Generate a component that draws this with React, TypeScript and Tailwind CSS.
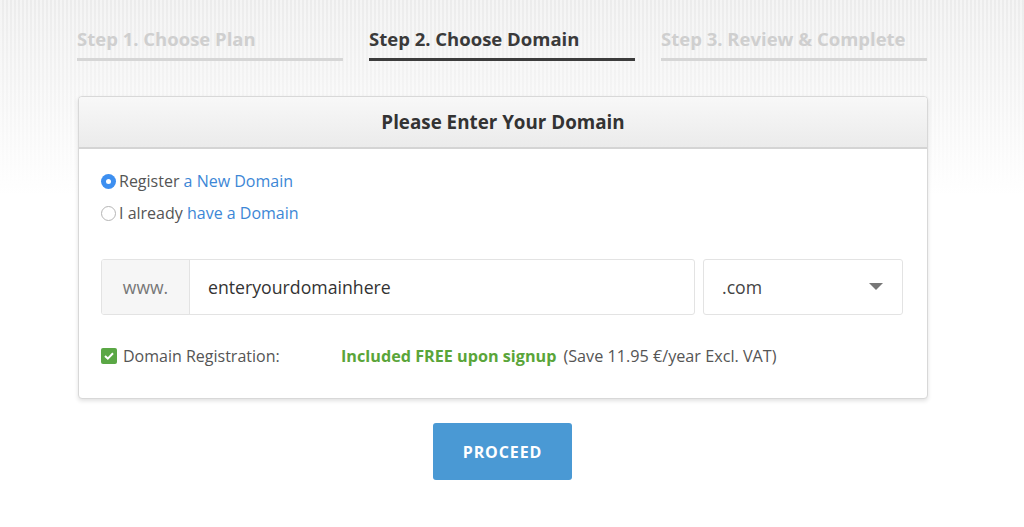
import React from "react";

export default function App() {
  return (
    <div
      className="min-h-[527px] w-full bg-[repeating-linear-gradient(90deg,rgba(255,255,255,0.45)_0px,rgba(255,255,255,0.45)_2px,transparent_2px,transparent_4px),linear-gradient(to_bottom,#ececec_0px,#f6f6f6_110px,#ffffff_195px)] bg-no-repeat [background-size:100%_200px,100%_200px]"
      style={{ fontFamily: '"Open Sans", "Noto Sans", sans-serif' }}
    >
      <div className="ml-[77px] w-[851px] pt-[26px]">
        {/* Steps */}
        <div className="flex gap-[26px]">
          <div className="w-[266px] border-b-[3px] border-[#d6d6d6] pb-[6px] text-[18.5px] font-bold leading-[26px] text-[#cfcfcf]">
            Step 1. Choose Plan
          </div>
          <div className="w-[266px] border-b-[3px] border-[#3c3c3c] pb-[6px] text-[18.5px] font-bold leading-[26px] text-[#3a3a3a]">
            Step 2. Choose Domain
          </div>
          <div className="w-[266px] border-b-[3px] border-[#d6d6d6] pb-[6px] text-[18.5px] font-bold leading-[26px] text-[#cfcfcf]">
            Step 3. Review &amp; Complete
          </div>
        </div>

        {/* Card */}
        <div className="mt-[35px] ml-px overflow-hidden rounded-[4px] border border-[#d8d8d8] bg-white shadow-[0_2px_4px_rgba(0,0,0,0.12)]">
          <div className="flex h-[52px] items-center justify-center border-b-2 border-[#d4d4d4] bg-[linear-gradient(to_bottom,#f8f8f8,#ebebeb)] text-[18.8px] font-bold text-[#333]">
            Please Enter Your Domain
          </div>
          <div className="px-[22px] pt-[21px] pb-[31px]">
            <div className="flex flex-col gap-[10px] text-[16px] leading-[22px] text-[#555]">
              <label className="flex items-center gap-[3px]">
                <span className="flex h-[15px] w-[15px] items-center justify-center rounded-full bg-[#3d8ff0]">
                  <span className="h-[5px] w-[5px] rounded-full bg-white" />
                </span>
                <span>
                  Register <span className="text-[#3d87d6]">a New Domain</span>
                </span>
              </label>
              <label className="flex items-center gap-[3px]">
                <span className="h-[15px] w-[15px] rounded-full border border-[#b5b5b5] bg-white" />
                <span>
                  I already <span className="text-[#3d87d6]">have a Domain</span>
                </span>
              </label>
            </div>

            <div className="mt-[35px] flex gap-[8px]">
              <div className="flex h-[56px] w-[594px] overflow-hidden rounded-[3px] border border-[#e3e3e3]">
                <div className="flex w-[88px] items-center justify-center border-r border-[#e3e3e3] bg-[#f6f6f6] text-[17.5px] text-[#777]">
                  www.
                </div>
                <div className="flex flex-1 items-center pl-[18px] text-[17.7px] text-[#333]">
                  enteryourdomainhere
                </div>
              </div>
              <div className="flex h-[56px] w-[200px] items-center justify-between rounded-[3px] border border-[#e3e3e3] pl-[18px] pr-[19px] text-[17.7px] text-[#444]">
                <span>.com</span>
                <svg width="14" height="8" viewBox="0 0 14 8">
                  <path d="M0 0 L14 0 L7 7 Z" fill="#777" />
                </svg>
              </div>
            </div>

            <div className="mt-[30px] flex items-center text-[16px] leading-[22px] text-[#555]">
              <span className="flex h-[16px] w-[16px] items-center justify-center rounded-[2px] bg-[#5aa745]">
                <svg width="10" height="8" viewBox="0 0 10 8">
                  <path d="M1 4 L3.8 6.6 L9 1.2" stroke="#fff" strokeWidth="2" fill="none" />
                </svg>
              </span>
              <span className="ml-[6px] w-[218px]">Domain Registration:</span>
              <span className="text-[16.2px] font-bold text-[#5aa53a]">Included FREE upon signup</span>
              <span className="ml-[7px] text-[16.2px]">(Save 11.95 €/year Excl. VAT)</span>
            </div>
          </div>
        </div>

        <div className="mt-[24px] flex justify-center">
          <button className="h-[57px] w-[139px] rounded-[3px] bg-[#4a99d4] text-[16px] font-bold uppercase tracking-[0.9px] text-white">
            Proceed
          </button>
        </div>
      </div>
    </div>
  );
}
